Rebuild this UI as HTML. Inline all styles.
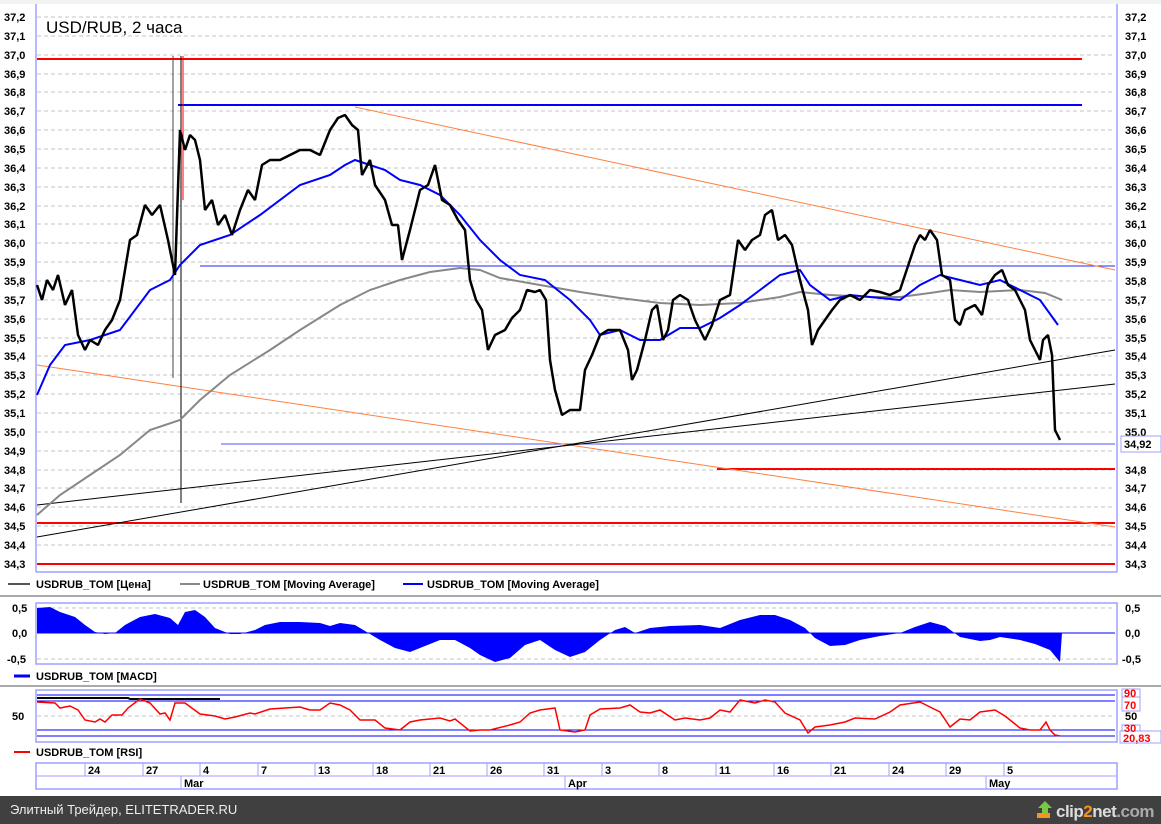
<!DOCTYPE html>
<html><head><meta charset="utf-8"><style>
body{margin:0;width:1161px;height:824px;background:#fff;overflow:hidden}
svg{display:block}
text{font-family:"Liberation Sans",sans-serif;font-size:11px;font-weight:bold;fill:#000}
</style></head><body>
<svg width="1161" height="824" viewBox="0 0 1161 824">
<rect x="0" y="0" width="1161" height="824" fill="#fff"/>
<rect x="0" y="0" width="1161" height="4" fill="#f2f2f2"/>
<g stroke="#c4c4c4" stroke-dasharray="4,3" stroke-width="1">
<line x1="37" x2="1115" y1="17" y2="17"/><line x1="37" x2="1115" y1="36" y2="36"/><line x1="37" x2="1115" y1="55" y2="55"/><line x1="37" x2="1115" y1="74" y2="74"/><line x1="37" x2="1115" y1="92" y2="92"/><line x1="37" x2="1115" y1="111" y2="111"/><line x1="37" x2="1115" y1="130" y2="130"/><line x1="37" x2="1115" y1="149" y2="149"/><line x1="37" x2="1115" y1="168" y2="168"/><line x1="37" x2="1115" y1="187" y2="187"/><line x1="37" x2="1115" y1="206" y2="206"/><line x1="37" x2="1115" y1="224" y2="224"/><line x1="37" x2="1115" y1="243" y2="243"/><line x1="37" x2="1115" y1="262" y2="262"/><line x1="37" x2="1115" y1="281" y2="281"/><line x1="37" x2="1115" y1="300" y2="300"/><line x1="37" x2="1115" y1="319" y2="319"/><line x1="37" x2="1115" y1="338" y2="338"/><line x1="37" x2="1115" y1="356" y2="356"/><line x1="37" x2="1115" y1="375" y2="375"/><line x1="37" x2="1115" y1="394" y2="394"/><line x1="37" x2="1115" y1="413" y2="413"/><line x1="37" x2="1115" y1="432" y2="432"/><line x1="37" x2="1115" y1="451" y2="451"/><line x1="37" x2="1115" y1="470" y2="470"/><line x1="37" x2="1115" y1="488" y2="488"/><line x1="37" x2="1115" y1="507" y2="507"/><line x1="37" x2="1115" y1="526" y2="526"/><line x1="37" x2="1115" y1="545" y2="545"/><line x1="37" x2="1115" y1="564" y2="564"/>
</g>
<g stroke="#a0a0ff" stroke-width="1.5" fill="none">
<line x1="36" y1="4" x2="36" y2="572"/><line x1="1117" y1="4" x2="1117" y2="572"/>
<line x1="36" y1="572" x2="1117" y2="572"/>
<rect x="36" y="603" width="1081" height="61"/>
<rect x="36" y="690" width="1081" height="52"/>
<rect x="36" y="763" width="1081" height="26"/>
</g>
<g text-anchor="start">
<text x="4" y="21">37,2</text><text x="4" y="40">37,1</text><text x="4" y="59">37,0</text><text x="4" y="78">36,9</text><text x="4" y="96">36,8</text><text x="4" y="115">36,7</text><text x="4" y="134">36,6</text><text x="4" y="153">36,5</text><text x="4" y="172">36,4</text><text x="4" y="191">36,3</text><text x="4" y="210">36,2</text><text x="4" y="228">36,1</text><text x="4" y="247">36,0</text><text x="4" y="266">35,9</text><text x="4" y="285">35,8</text><text x="4" y="304">35,7</text><text x="4" y="323">35,6</text><text x="4" y="342">35,5</text><text x="4" y="360">35,4</text><text x="4" y="379">35,3</text><text x="4" y="398">35,2</text><text x="4" y="417">35,1</text><text x="4" y="436">35,0</text><text x="4" y="455">34,9</text><text x="4" y="474">34,8</text><text x="4" y="492">34,7</text><text x="4" y="511">34,6</text><text x="4" y="530">34,5</text><text x="4" y="549">34,4</text><text x="4" y="568">34,3</text>
<text x="1125" y="21">37,2</text><text x="1125" y="40">37,1</text><text x="1125" y="59">37,0</text><text x="1125" y="78">36,9</text><text x="1125" y="96">36,8</text><text x="1125" y="115">36,7</text><text x="1125" y="134">36,6</text><text x="1125" y="153">36,5</text><text x="1125" y="172">36,4</text><text x="1125" y="191">36,3</text><text x="1125" y="210">36,2</text><text x="1125" y="228">36,1</text><text x="1125" y="247">36,0</text><text x="1125" y="266">35,9</text><text x="1125" y="285">35,8</text><text x="1125" y="304">35,7</text><text x="1125" y="323">35,6</text><text x="1125" y="342">35,5</text><text x="1125" y="360">35,4</text><text x="1125" y="379">35,3</text><text x="1125" y="398">35,2</text><text x="1125" y="417">35,1</text><text x="1125" y="436">35,0</text><text x="1125" y="474">34,8</text><text x="1125" y="492">34,7</text><text x="1125" y="511">34,6</text><text x="1125" y="530">34,5</text><text x="1125" y="549">34,4</text><text x="1125" y="568">34,3</text>
</g>
<text x="46" y="33" style="font-size:17px;font-weight:normal">USD/RUB, 2 часа</text>
<g fill="none">
<line x1="37" y1="59" x2="1082" y2="59" stroke="#f00" stroke-width="2"/>
<line x1="178" y1="105" x2="1082" y2="105" stroke="#00f" stroke-width="2"/>
<line x1="200" y1="266" x2="1115" y2="266" stroke="#2020ff" stroke-width="1"/>
<line x1="221" y1="444" x2="1115" y2="444" stroke="#5050ff" stroke-width="1"/>
<line x1="717" y1="469" x2="1115" y2="469" stroke="#f00" stroke-width="2"/>
<line x1="37" y1="523" x2="1115" y2="523" stroke="#f00" stroke-width="2"/>
<line x1="37" y1="564" x2="1115" y2="564" stroke="#f00" stroke-width="2"/>
<line x1="355" y1="107" x2="1115" y2="270" stroke="#ff8040" stroke-width="1"/>
<line x1="37" y1="365" x2="1115" y2="527" stroke="#ff8040" stroke-width="1"/>
<line x1="37" y1="537" x2="1115" y2="350" stroke="#000" stroke-width="1"/>
<line x1="37" y1="505" x2="1115" y2="384" stroke="#000" stroke-width="1"/>
<line x1="173" y1="56" x2="173" y2="378" stroke="#444" stroke-width="1"/>
<line x1="181" y1="56" x2="181" y2="503" stroke="#000" stroke-width="1"/>
<line x1="183" y1="56" x2="183" y2="200" stroke="#f00" stroke-width="1"/>
<polyline stroke="#888" stroke-width="2" points="37,515 60,495 90,475 120,455 150,430 180,420 200,400 230,375 270,350 300,330 340,305 370,290 400,280 430,272 460,268 480,270 500,278 540,285 580,292 620,298 660,303 700,305 740,303 780,297 800,292 830,295 870,297 900,297 930,293 950,290 980,292 1020,290 1045,293 1062,300"/>
<polyline stroke="#00f" stroke-width="2" points="37,395 50,365 65,345 90,340 120,330 150,290 170,280 180,265 200,245 230,235 260,215 300,185 330,175 345,165 355,160 370,165 385,170 400,180 420,185 440,195 460,215 480,240 500,260 520,275 545,280 570,300 590,320 600,335 620,330 640,340 660,340 680,328 700,328 720,318 740,305 760,290 780,275 800,270 810,285 830,300 850,295 880,298 900,300 920,285 940,275 960,280 980,285 1000,280 1020,290 1040,300 1058,325"/>
<polyline stroke="#000" stroke-width="2.5" stroke-linejoin="bevel" points="37,285 42,300 47,280 53,290 58,275 65,305 72,290 78,335 85,350 90,340 98,345 105,330 112,320 120,300 125,270 130,240 137,235 145,205 152,215 160,205 168,240 175,275 180,130 185,150 190,135 195,140 200,160 205,210 212,200 218,225 225,215 232,235 240,210 248,190 255,200 262,165 270,160 280,160 290,155 300,150 310,150 320,155 330,130 338,118 345,115 352,125 358,130 362,175 370,160 375,185 385,200 392,225 398,225 402,260 410,230 420,190 428,185 435,165 442,200 450,205 458,220 465,230 470,280 476,300 482,310 488,350 495,335 505,330 512,318 520,310 527,290 535,292 540,290 546,300 550,360 555,390 562,415 570,410 580,410 585,370 592,355 600,335 608,330 620,330 628,350 632,380 637,370 645,340 652,310 657,305 663,340 668,330 673,300 680,295 688,300 695,320 700,330 705,340 712,325 720,300 730,295 738,240 745,250 752,240 760,235 765,215 772,210 778,240 785,235 792,245 800,280 808,310 812,345 818,330 825,320 832,310 840,300 850,295 860,300 870,290 880,292 890,295 900,290 910,260 915,245 920,235 925,240 930,230 937,240 942,275 950,280 955,320 960,325 965,310 975,305 982,315 988,285 995,275 1002,270 1008,285 1015,290 1020,300 1025,310 1030,340 1035,350 1040,360 1043,340 1048,335 1052,355 1055,430 1060,440"/>
</g>
<rect x="1121" y="436" width="40" height="16" fill="#fff" stroke="#a0a0ff"/>
<text x="1124" y="448">34,92</text>
<line x1="8" y1="584" x2="30" y2="584" stroke="#555" stroke-width="2"/>
<text x="36" y="588">USDRUB_TOM [Цена]</text>
<line x1="180" y1="584" x2="200" y2="584" stroke="#888" stroke-width="2"/>
<text x="203" y="588">USDRUB_TOM [Moving Average]</text>
<line x1="403" y1="584" x2="423" y2="584" stroke="#00f" stroke-width="2"/>
<text x="427" y="588">USDRUB_TOM [Moving Average]</text>
<line x1="0" y1="596" x2="1161" y2="596" stroke="#aaa" stroke-width="2"/>
<g stroke="#c4c4c4" stroke-dasharray="4,3"><line x1="37" x2="1115" y1="608" y2="608"/><line x1="37" x2="1115" y1="659" y2="659"/></g>
<line x1="37" x2="1115" y1="633" y2="633" stroke="#00f"/>
<polygon fill="#0000ff" points="37,633 37,608 50,607 60,612 75,617 85,625 95,632 105,634 115,633 125,625 140,617 155,614 170,618 178,625 185,612 195,610 205,617 215,628 230,634 240,634 255,630 265,625 280,622 300,622 320,623 330,626 340,623 355,625 365,631 380,640 395,648 410,652 420,648 440,640 455,640 470,648 480,655 495,662 510,658 525,645 540,640 555,650 570,657 585,652 600,640 615,630 625,627 635,633 650,628 670,626 700,625 720,628 740,620 760,615 775,615 790,620 805,628 815,638 830,646 845,645 860,640 880,636 900,633 915,627 930,622 945,626 960,637 980,641 990,640 1000,637 1020,640 1035,644 1050,650 1060,662 1062,633"/>
<text x="12" y="612">0,5</text><text x="12" y="637">0,0</text><text x="7" y="663">-0,5</text>
<text x="1125" y="612">0,5</text><text x="1125" y="637">0,0</text><text x="1122" y="663">-0,5</text>
<line x1="14" y1="676" x2="30" y2="676" stroke="#00f" stroke-width="3"/>
<text x="36" y="680">USDRUB_TOM [MACD]</text>
<line x1="0" y1="686" x2="1161" y2="686" stroke="#aaa" stroke-width="2"/>
<g stroke="#00f"><line x1="37" x2="1115" y1="695" y2="695"/><line x1="37" x2="1115" y1="701" y2="701"/><line x1="37" x2="1115" y1="730" y2="730"/><line x1="37" x2="1115" y1="736" y2="736"/></g>
<line x1="37" x2="1115" y1="716" y2="716" stroke="#c4c4c4" stroke-dasharray="4,3"/>
<polyline fill="none" stroke="#000" stroke-width="2" points="37,698 128,698 130,699 220,699"/>
<polyline fill="none" stroke="#f00" stroke-width="1.5" points="37,702 55,703 60,708 70,706 78,710 85,720 95,722 100,719 105,722 112,715 122,715 128,708 140,699 150,703 160,714 165,713 170,720 175,703 185,703 200,714 215,716 225,719 235,717 250,713 255,714 270,709 285,708 300,707 310,710 320,710 330,703 340,705 350,710 360,720 375,720 385,728 400,730 410,722 420,720 440,718 450,721 455,719 470,731 480,730 490,730 510,725 520,722 530,713 540,710 555,708 560,730 575,732 585,730 590,715 600,709 620,708 630,705 640,712 650,713 660,710 675,720 685,718 700,720 710,718 720,710 730,712 740,700 755,703 765,700 775,702 785,713 800,720 808,733 815,727 830,725 845,722 855,718 875,719 890,712 900,705 920,702 930,707 940,712 950,727 960,719 970,720 980,712 995,710 1005,716 1015,724 1020,728 1030,730 1040,730 1046,722 1050,730 1055,735 1060,736"/>
<text x="12" y="720">50</text><text x="1125" y="720">50</text>
<g fill="#fff" stroke="#a0a0ff"><rect x="1122" y="689" width="18" height="10"/><rect x="1122" y="697" width="18" height="14"/><rect x="1122" y="725" width="18" height="8"/><rect x="1120" y="731" width="41" height="12"/></g>
<text x="1124" y="697" style="fill:#f00">90</text><text x="1124" y="709" style="fill:#f00">70</text><text x="1124" y="732" style="fill:#f00">30</text><text x="1123" y="742" style="fill:#f00">20,83</text>
<line x1="14" y1="752" x2="30" y2="752" stroke="#f00" stroke-width="2"/>
<text x="36" y="756">USDRUB_TOM [RSI]</text>
<line x1="36" y1="776" x2="1117" y2="776" stroke="#a0a0ff"/>
<g stroke="#a0a0ff"><line x1="85" y1="763" x2="85" y2="776"/><line x1="143" y1="763" x2="143" y2="776"/><line x1="200" y1="763" x2="200" y2="776"/><line x1="258" y1="763" x2="258" y2="776"/><line x1="315" y1="763" x2="315" y2="776"/><line x1="373" y1="763" x2="373" y2="776"/><line x1="430" y1="763" x2="430" y2="776"/><line x1="487" y1="763" x2="487" y2="776"/><line x1="544" y1="763" x2="544" y2="776"/><line x1="602" y1="763" x2="602" y2="776"/><line x1="659" y1="763" x2="659" y2="776"/><line x1="716" y1="763" x2="716" y2="776"/><line x1="774" y1="763" x2="774" y2="776"/><line x1="831" y1="763" x2="831" y2="776"/><line x1="889" y1="763" x2="889" y2="776"/><line x1="946" y1="763" x2="946" y2="776"/><line x1="1004" y1="763" x2="1004" y2="776"/><line x1="181" y1="776" x2="181" y2="789"/><line x1="565" y1="776" x2="565" y2="789"/><line x1="986" y1="776" x2="986" y2="789"/></g>
<text x="88" y="774">24</text><text x="146" y="774">27</text><text x="203" y="774">4</text><text x="261" y="774">7</text><text x="318" y="774">13</text><text x="376" y="774">18</text><text x="433" y="774">21</text><text x="490" y="774">26</text><text x="547" y="774">31</text><text x="605" y="774">3</text><text x="662" y="774">8</text><text x="719" y="774">11</text><text x="777" y="774">16</text><text x="834" y="774">21</text><text x="892" y="774">24</text><text x="949" y="774">29</text><text x="1007" y="774">5</text>
<text x="184" y="787">Mar</text><text x="568" y="787">Apr</text><text x="989" y="787">May</text>
<rect x="0" y="796" width="1161" height="28" fill="#404040"/>
<text x="10" y="814" style="fill:#eee;font-weight:normal;font-size:13px">Элитный Трейдер, ELITETRADER.RU</text>
<polygon points="1038,808 1045,801 1052,808 1048,808 1048,815 1042,815 1042,808" fill="#7ac943"/>
<rect x="1037" y="813" width="13" height="5" fill="#f7941d"/>
<text x="1056" y="817" style="fill:#ddd;font-size:17px;letter-spacing:-0.5px">clip<tspan fill="#f7941d">2</tspan>net<tspan fill="#aaa">.com</tspan></text>
</svg>
</body></html>
